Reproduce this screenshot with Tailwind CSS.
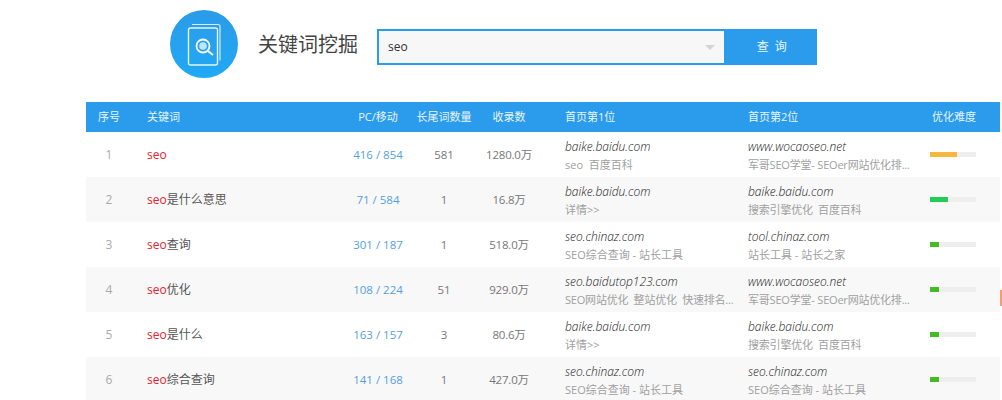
<!DOCTYPE html>
<html lang="zh-CN">
<head>
    <meta charset="UTF-8">
    <title>关键词挖掘</title>
    <script src="https://cdn.jsdelivr.net/npm/@tailwindcss/browser@4"></script>
</head>
<body class="w-[1002px] h-[400px] overflow-hidden bg-white relative font-['Open_Sans','Noto_Sans_CJK_SC',sans-serif] text-[11.5px] text-[#777]">

    <!-- Search header -->
    <header class="h-[102px] pl-[170px] pt-[10px] flex items-start">
        <div class="w-[68px] h-[68px] rounded-full bg-gradient-to-b from-[#2b9be8] to-[#1fa9f5] flex items-center justify-center">
            <svg width="36" height="44" viewBox="0 0 36 44" fill="none" class="mt-[2px] ml-[1px]">
                <path d="M5 1.5h26a2 2 0 0 1 2 2v34" stroke="#cfeeff" stroke-width="1.2"/>
                <rect x="1.5" y="5" width="29" height="37" rx="2" stroke="#e6f6ff" stroke-width="1.4"/>
                <circle cx="16" cy="23" r="6.5" stroke="#fff" stroke-width="1.8"/>
                <circle cx="16" cy="23" r="3.8" fill="#bfe6fb"/>
                <path d="M21 28l5 4" stroke="#fff" stroke-width="2"/>
            </svg>
        </div>
        <h1 class="ml-[20px] mt-[20px] text-[20px] leading-[30px] text-[#444]">关键词挖掘</h1>
        <div class="ml-[19px] mt-[19px] flex h-[36px]">
            <div class="w-[349px] border-2 border-[#2b9ceb] bg-[#f7f7f7] flex items-center justify-between pl-[9px] pr-[9px]">
                <span class="text-[12px] text-[#333]">seo</span>
                <span class="w-0 h-0 border-x-[5px] border-x-transparent border-t-[5px] border-t-[#d4d4d4]"></span>
            </div>
            <button class="w-[91px] pl-[2px] bg-[#2b9ceb] text-[#e8f5fe] text-[12px] tracking-[1.5px]">查 询</button>
        </div>
    </header>

    <!-- Table -->
    <section class="ml-[86px] w-[914px]">
        <div class="grid grid-cols-[46px_208px_76px_56px_74px_183px_182px_89px] h-[30px] items-center bg-[#2b9ceb] text-[#e8f5fe] text-[11px] pt-[1px]">
            <div class="text-center">序号</div>
            <div class="pl-[15px]">关键词</div>
            <div class="text-center">PC/移动</div>
            <div class="text-center whitespace-nowrap">长尾词数量</div>
            <div class="text-center">收录数</div>
            <div class="pl-[19px]">首页第1位</div>
            <div class="pl-[19px]">首页第2位</div>
            <div class="pl-[21px]">优化难度</div>
        </div>

        <div class="grid grid-cols-[46px_208px_76px_56px_74px_183px_182px_89px] h-[45px] items-center">
            <div class="text-center text-[#aaa] text-[12px]">1</div>
            <div class="pl-[15px] text-[12px]"><span class="text-[#e8222c]">seo</span></div>
            <div class="text-center text-[#559fe0] whitespace-nowrap">416 / 854</div>
            <div class="text-center">581</div>
            <div class="text-center tracking-[-0.2px]">1280.0万</div>
            <div class="pl-[19px] leading-[18px] pt-[2px]"><div class="italic font-light text-[12px] text-[#222]">baike.baidu.com</div><div class="text-[#a0a0a0] text-[11px]">seo&nbsp; 百度百科</div></div>
            <div class="pl-[19px] leading-[18px] pt-[2px]"><div class="italic font-light text-[12px] text-[#222]">www.wocaoseo.net</div><div class="text-[#a0a0a0] text-[11px] tracking-[-0.2px] whitespace-nowrap">军哥SEO学堂- SEOer网站优化排...</div></div>
            <div class="pl-[19px]"><div class="w-[46px] h-[5px] bg-[#eee]"><div class="h-full bg-[#f5b83d]" style="width:59%"></div></div></div>
        </div>

        <div class="grid grid-cols-[46px_208px_76px_56px_74px_183px_182px_89px] h-[45px] items-center bg-[#f8f8f8]">
            <div class="text-center text-[#aaa] text-[12px]">2</div>
            <div class="pl-[15px] text-[12px] text-[#555]"><span class="text-[#e8222c]">seo</span>是什么意思</div>
            <div class="text-center text-[#559fe0] whitespace-nowrap">71 / 584</div>
            <div class="text-center">1</div>
            <div class="text-center tracking-[-0.2px]">16.8万</div>
            <div class="pl-[19px] leading-[18px] pt-[2px]"><div class="italic font-light text-[12px] text-[#222]">baike.baidu.com</div><div class="text-[#a0a0a0] text-[11px]">详情&gt;&gt;</div></div>
            <div class="pl-[19px] leading-[18px] pt-[2px]"><div class="italic font-light text-[12px] text-[#222]">baike.baidu.com</div><div class="text-[#a0a0a0] text-[11px] tracking-[-0.2px]">搜索引擎优化&nbsp; 百度百科</div></div>
            <div class="pl-[19px]"><div class="w-[46px] h-[5px] bg-[#eee]"><div class="h-full bg-[#22cc55]" style="width:39%"></div></div></div>
        </div>

        <div class="grid grid-cols-[46px_208px_76px_56px_74px_183px_182px_89px] h-[45px] items-center">
            <div class="text-center text-[#aaa] text-[12px]">3</div>
            <div class="pl-[15px] text-[12px] text-[#555]"><span class="text-[#e8222c]">seo</span>查询</div>
            <div class="text-center text-[#559fe0] whitespace-nowrap">301 / 187</div>
            <div class="text-center">1</div>
            <div class="text-center tracking-[-0.2px]">518.0万</div>
            <div class="pl-[19px] leading-[18px] pt-[2px]"><div class="italic font-light text-[12px] text-[#222]">seo.chinaz.com</div><div class="text-[#a0a0a0] text-[11px]">SEO综合查询 - 站长工具</div></div>
            <div class="pl-[19px] leading-[18px] pt-[2px]"><div class="italic font-light text-[12px] text-[#222]">tool.chinaz.com</div><div class="text-[#a0a0a0] text-[11px]">站长工具 - 站长之家</div></div>
            <div class="pl-[19px]"><div class="w-[46px] h-[5px] bg-[#eee]"><div class="h-full bg-[#44bb22]" style="width:20%"></div></div></div>
        </div>

        <div class="grid grid-cols-[46px_208px_76px_56px_74px_183px_182px_89px] h-[45px] items-center bg-[#f8f8f8]">
            <div class="text-center text-[#aaa] text-[12px]">4</div>
            <div class="pl-[15px] text-[12px] text-[#555]"><span class="text-[#e8222c]">seo</span>优化</div>
            <div class="text-center text-[#559fe0] whitespace-nowrap">108 / 224</div>
            <div class="text-center">51</div>
            <div class="text-center tracking-[-0.2px]">929.0万</div>
            <div class="pl-[19px] leading-[18px] pt-[2px]"><div class="italic font-light text-[12px] text-[#222]">seo.baidutop123.com</div><div class="text-[#a0a0a0] text-[11px] tracking-[-0.2px] whitespace-nowrap">SEO网站优化&nbsp; 整站优化&nbsp; 快速排名...</div></div>
            <div class="pl-[19px] leading-[18px] pt-[2px]"><div class="italic font-light text-[12px] text-[#222]">www.wocaoseo.net</div><div class="text-[#a0a0a0] text-[11px] tracking-[-0.2px] whitespace-nowrap">军哥SEO学堂- SEOer网站优化排...</div></div>
            <div class="pl-[19px]"><div class="w-[46px] h-[5px] bg-[#eee]"><div class="h-full bg-[#44bb22]" style="width:20%"></div></div></div>
        </div>

        <div class="grid grid-cols-[46px_208px_76px_56px_74px_183px_182px_89px] h-[45px] items-center">
            <div class="text-center text-[#aaa] text-[12px]">5</div>
            <div class="pl-[15px] text-[12px] text-[#555]"><span class="text-[#e8222c]">seo</span>是什么</div>
            <div class="text-center text-[#559fe0] whitespace-nowrap">163 / 157</div>
            <div class="text-center">3</div>
            <div class="text-center tracking-[-0.2px]">80.6万</div>
            <div class="pl-[19px] leading-[18px] pt-[2px]"><div class="italic font-light text-[12px] text-[#222]">baike.baidu.com</div><div class="text-[#a0a0a0] text-[11px]">详情&gt;&gt;</div></div>
            <div class="pl-[19px] leading-[18px] pt-[2px]"><div class="italic font-light text-[12px] text-[#222]">baike.baidu.com</div><div class="text-[#a0a0a0] text-[11px] tracking-[-0.2px]">搜索引擎优化&nbsp; 百度百科</div></div>
            <div class="pl-[19px]"><div class="w-[46px] h-[5px] bg-[#eee]"><div class="h-full bg-[#44bb22]" style="width:20%"></div></div></div>
        </div>

        <div class="grid grid-cols-[46px_208px_76px_56px_74px_183px_182px_89px] h-[45px] items-center bg-[#f8f8f8]">
            <div class="text-center text-[#aaa] text-[12px]">6</div>
            <div class="pl-[15px] text-[12px] text-[#555]"><span class="text-[#e8222c]">seo</span>综合查询</div>
            <div class="text-center text-[#559fe0] whitespace-nowrap">141 / 168</div>
            <div class="text-center">1</div>
            <div class="text-center tracking-[-0.2px]">427.0万</div>
            <div class="pl-[19px] leading-[18px] pt-[2px]"><div class="italic font-light text-[12px] text-[#222]">seo.chinaz.com</div><div class="text-[#a0a0a0] text-[11px]">SEO综合查询 - 站长工具</div></div>
            <div class="pl-[19px] leading-[18px] pt-[2px]"><div class="italic font-light text-[12px] text-[#222]">seo.chinaz.com</div><div class="text-[#a0a0a0] text-[11px]">SEO综合查询 - 站长工具</div></div>
            <div class="pl-[19px]"><div class="w-[46px] h-[5px] bg-[#eee]"><div class="h-full bg-[#44bb22]" style="width:20%"></div></div></div>
        </div>
    </section>

    <!-- clipped floating tab at the right edge -->
    <div class="absolute left-[1000px] top-[290px] w-[2px] h-[16px] bg-[#f0a070]"></div>
</body>
</html>
